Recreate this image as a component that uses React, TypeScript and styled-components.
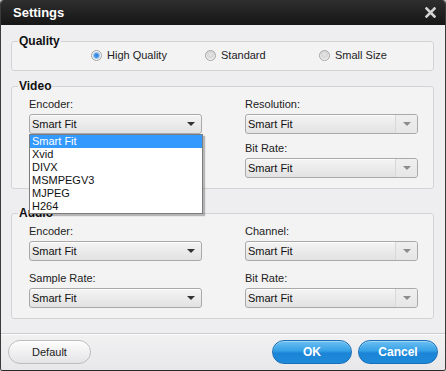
import React from 'react';
import styled, { createGlobalStyle } from 'styled-components';

const GlobalStyle = createGlobalStyle`
  html, body {
    margin: 0;
    padding: 0;
    background: #c4c4c4;
  }
  body {
    font-family: 'Liberation Sans', Arial, sans-serif;
  }
`;

const encoderOptions = ['Smart Fit', 'Xvid', 'DIVX', 'MSMPEGV3', 'MJPEG', 'H264'];

const qualityOptions = [
  { label: 'High Quality', checked: true },
  { label: 'Standard', checked: false },
  { label: 'Small Size', checked: false },
];

type FieldProps = {
  label: string;
  muted?: boolean;
  open?: boolean;
};

const Field: React.FC<FieldProps> = ({ label, muted, open }) => (
  <FieldBox>
    <FieldLabel>{label}</FieldLabel>
    <SelectWrap>
      <Select>
        <SelectText>Smart Fit</SelectText>
        <Arrow $muted={muted}>
          <ArrowGlyph $muted={muted} />
        </Arrow>
      </Select>
      {open && (
        <DropList>
          {encoderOptions.map((opt, i) => (
            <DropItem key={opt} $active={i === 0}>
              {opt}
            </DropItem>
          ))}
        </DropList>
      )}
    </SelectWrap>
  </FieldBox>
);

const App: React.FC = () => {
  return (
    <>
      <GlobalStyle />
      <Window>
        <TitleBar>
          <Title>Settings</Title>
          <CloseButton>
            <svg width="11" height="11" viewBox="0 0 11 11">
              <path d="M1.5 1.5 L9.5 9.5 M9.5 1.5 L1.5 9.5" stroke="#d2d2d2" strokeWidth="2.6" strokeLinecap="square" />
            </svg>
          </CloseButton>
        </TitleBar>

        <Main>
          <Group $gap={0}>
            <Legend>Quality</Legend>
            <RadioRow>
              {qualityOptions.map((q) => (
                <RadioItem key={q.label}>
                  <RadioDot $checked={q.checked} />
                  <span>{q.label}</span>
                </RadioItem>
              ))}
            </RadioRow>
          </Group>

          <Group $gap={8}>
            <Legend>Video</Legend>
            <FieldGrid $rowGap={7}>
              <Field label="Encoder:" open />
              <Field label="Resolution:" muted />
              <div />
              <Field label="Bit Rate:" muted />
            </FieldGrid>
          </Group>

          <Group $gap={17}>
            <Legend>Audio</Legend>
            <FieldGrid $rowGap={10}>
              <Field label="Encoder:" />
              <Field label="Channel:" muted />
              <Field label="Sample Rate:" />
              <Field label="Bit Rate:" muted />
            </FieldGrid>
          </Group>
        </Main>

        <Footer>
          <PillButton $primary={false}>Default</PillButton>
          <FooterRight>
            <PillButton $primary>OK</PillButton>
            <PillButton $primary>Cancel</PillButton>
          </FooterRight>
        </Footer>
      </Window>
    </>
  );
};

const Window = styled.div`
  width: 446px;
  height: 371px;
  box-sizing: border-box;
  display: flex;
  flex-direction: column;
  background: #eeeef0;
  border-left: 1px solid #3a3a3a;
  border-right: 1px solid #3a3a3a;
  border-bottom: 1px solid #2a2a2a;
  border-radius: 4px 4px 3px 3px;
  overflow: hidden;
`;

const TitleBar = styled.div`
  height: 25px;
  flex-shrink: 0;
  display: flex;
  align-items: center;
  justify-content: space-between;
  padding: 0 9px 0 12px;
  background: linear-gradient(#2e2e2e, #161616);
`;

const Title = styled.div`
  color: #ffffff;
  font-weight: bold;
  font-size: 13px;
  line-height: 16px;
`;

const CloseButton = styled.div`
  display: flex;
  width: 11px;
  height: 11px;
`;

const Main = styled.div`
  flex: 1;
  padding: 9px 11px 0 10px;
`;

const Group = styled.fieldset<{ $gap: number }>`
  margin: ${(p) => p.$gap}px 0 0 0;
  padding: 0;
  border: 1px solid #d3d3d5;
  border-radius: 3px;
  background: #f3f3f4;
  min-width: 0;
`;

const Legend = styled.legend`
  margin-left: 6px;
  padding: 0 1px;
  font-weight: bold;
  font-size: 12px;
  line-height: 14px;
  color: #111;
`;

const RadioRow = styled.div`
  display: grid;
  grid-template-columns: repeat(3, 114px);
  padding: 0 0 8px 79px;
`;

const RadioItem = styled.label`
  display: flex;
  align-items: center;
  gap: 5px;
  height: 14px;
  font-size: 11px;
  color: #222;
`;

const RadioDot = styled.span<{ $checked: boolean }>`
  width: 11px;
  height: 11px;
  box-sizing: border-box;
  border-radius: 50%;
  border: 1px solid #a4a4a4;
  background: ${(p) =>
    p.$checked
      ? 'radial-gradient(circle, #2b7fd6 0, #4d9ae6 2px, #9cc6ef 3px, #f4f4f4 4px)'
      : 'radial-gradient(circle at 50% 40%, #e6e6e6 0, #d6d6d6 3px, #f3f3f3 5px)'};
`;

const FieldGrid = styled.div<{ $rowGap: number }>`
  display: grid;
  grid-template-columns: 173px 173px;
  column-gap: 43px;
  row-gap: ${(p) => p.$rowGap}px;
  padding: 4px 16px 10px 17px;
`;

const FieldBox = styled.div`
  display: flex;
  flex-direction: column;
  gap: 3px;
`;

const FieldLabel = styled.div`
  font-size: 11px;
  line-height: 14px;
  color: #222;
`;

const SelectWrap = styled.div`
  position: relative;
`;

const Select = styled.div`
  height: 20px;
  box-sizing: border-box;
  display: flex;
  align-items: center;
  justify-content: space-between;
  border: 1px solid #a9a9ab;
  border-radius: 3px;
  background: linear-gradient(#f4f4f4, #e2e2e3);
  box-shadow: inset 0 1px 0 #fdfdfd;
  overflow: hidden;
`;

const SelectText = styled.span`
  padding-left: 2px;
  font-size: 11px;
  color: #111;
`;

const Arrow = styled.span<{ $muted?: boolean }>`
  width: 21px;
  height: 100%;
  display: flex;
  align-items: center;
  justify-content: center;
  background: ${(p) => (p.$muted ? 'linear-gradient(#efefef, #e6e6e7)' : 'transparent')};
  border-left: 1px solid ${(p) => (p.$muted ? '#d8d8d8' : 'transparent')};
`;

const ArrowGlyph = styled.span<{ $muted?: boolean }>`
  width: 0;
  height: 0;
  border-left: 4px solid transparent;
  border-right: 4px solid transparent;
  border-top: 4px solid ${(p) => (p.$muted ? '#8c8c8c' : '#333')};
`;

const DropList = styled.div`
  position: absolute;
  top: 100%;
  left: 0;
  width: 174px;
  z-index: 5;
  box-sizing: border-box;
  border: 1px solid #7d7d7d;
  background: #ffffff;
  box-shadow: 2px 2px 1px rgba(0, 0, 0, 0.25);
`;

const DropItem = styled.div<{ $active: boolean }>`
  height: 13px;
  line-height: 13px;
  padding-left: 2px;
  font-size: 11px;
  color: ${(p) => (p.$active ? '#ffffff' : '#111')};
  background: ${(p) => (p.$active ? '#3399ff' : 'transparent')};
`;

const Footer = styled.div`
  height: 37px;
  flex-shrink: 0;
  box-sizing: border-box;
  display: flex;
  align-items: center;
  justify-content: space-between;
  padding: 0 7px;
  border-top: 1px solid #cdcdcf;
  box-shadow: inset 0 1px 0 #fbfbfb;
  background: linear-gradient(#f1f1f2, #e8e8ea);
`;

const FooterRight = styled.div`
  display: flex;
  gap: 6px;
`;

const PillButton = styled.div<{ $primary: boolean }>`
  width: ${(p) => (p.$primary ? '80px' : '83px')};
  height: 24px;
  box-sizing: border-box;
  border-radius: 12px;
  display: flex;
  align-items: center;
  justify-content: center;
  font-size: ${(p) => (p.$primary ? '12px' : '11px')};
  font-weight: ${(p) => (p.$primary ? 'bold' : 'normal')};
  color: ${(p) => (p.$primary ? '#ffffff' : '#222')};
  border: 1px solid ${(p) => (p.$primary ? '#1b6fb8' : '#bdbdbf')};
  background: ${(p) =>
    p.$primary
      ? 'linear-gradient(#6cc0f2 0%, #34a0e6 45%, #1b84d6 55%, #1f8ad9 100%)'
      : 'linear-gradient(#fdfdfd, #e4e4e6)'};
  box-shadow: ${(p) => (p.$primary ? 'inset 0 1px 0 rgba(255,255,255,0.35)' : 'inset 0 1px 0 #ffffff')};
`;

export default App;
